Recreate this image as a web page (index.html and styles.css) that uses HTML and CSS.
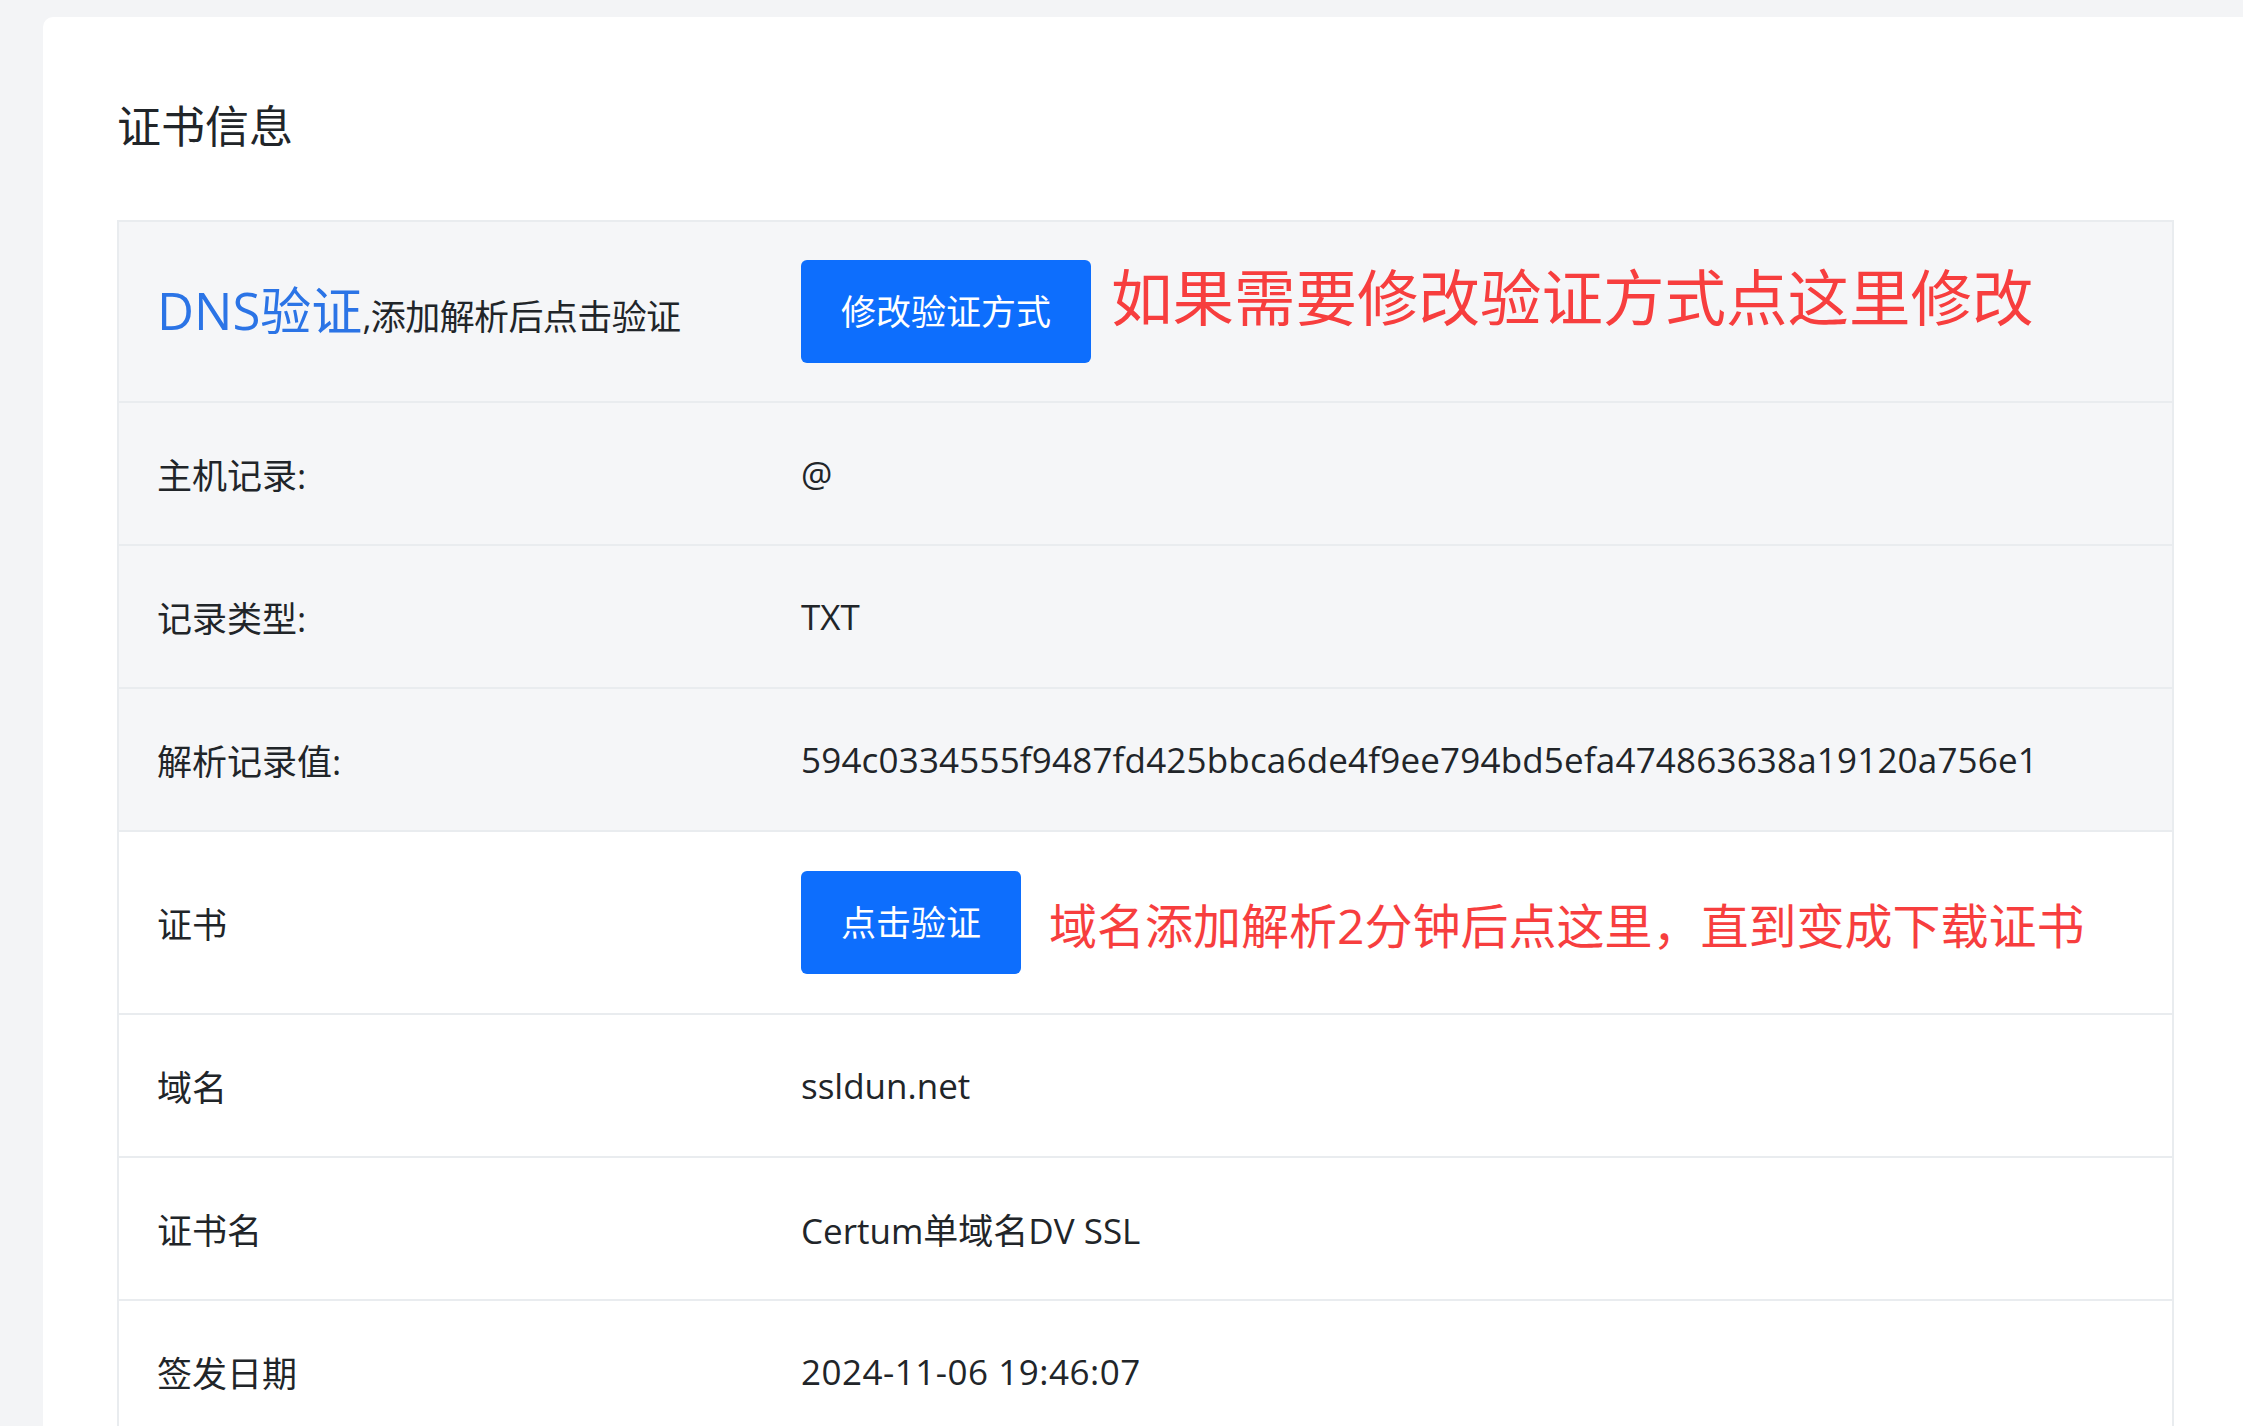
FILE: index.html
```html
<!DOCTYPE html>
<html lang="zh-CN">
<head>
<meta charset="utf-8">
<title>证书信息</title>
<link rel="stylesheet" href="styles.css">
</head>
<body>
<div class="card">
  <h2 class="title">证书信息</h2>
  <div class="table">
    <div class="row gray tall">
      <div class="label"><span class="dns">DNS验证</span><span class="hint">,添加解析后点击验证</span></div>
      <div class="value"><button class="btn">修改验证方式</button><span class="note note-a">如果需要修改验证方式点这里修改</span></div>
    </div>
    <div class="row gray">
      <div class="label">主机记录:</div>
      <div class="value">@</div>
    </div>
    <div class="row gray">
      <div class="label">记录类型:</div>
      <div class="value">TXT</div>
    </div>
    <div class="row gray">
      <div class="label">解析记录值:</div>
      <div class="value hash">594c0334555f9487fd425bbca6de4f9ee794bd5efa474863638a19120a756e1</div>
    </div>
    <div class="row tall">
      <div class="label">证书</div>
      <div class="value"><button class="btn">点击验证</button><span class="note note-b">域名添加解析2分钟后点这里，直到变成下载证书</span></div>
    </div>
    <div class="row">
      <div class="label">域名</div>
      <div class="value">ssldun.net</div>
    </div>
    <div class="row">
      <div class="label">证书名</div>
      <div class="value">Certum单域名DV SSL</div>
    </div>
    <div class="row">
      <div class="label">签发日期</div>
      <div class="value date">2024-11-06 19:46:07</div>
    </div>
  </div>
</div>
</body>
</html>
```
FILE: styles.css
```css
html, body {
  margin: 0;
  padding: 0;
  background: #f3f4f6;
  overflow: hidden;
}
body {
  font-family: "Open Sans", "Noto Sans CJK SC", sans-serif;
  color: #212529;
}
.card {
  margin: 17px -40px 0 43px;
  background: #ffffff;
  border-radius: 10px 0 0 0;
  padding: 71px 0 0 74px;
  min-height: 1500px;
  box-sizing: border-box;
}
.title {
  margin: 0 0 56px 0;
  font-weight: 400;
  font-size: 44px;
  line-height: 76px;
  color: #212529;
}
.table {
  width: 2057px;
  border: 2px solid #e9ecef;
  border-bottom: none;
  box-sizing: border-box;
}
.row {
  display: grid;
  grid-template-columns: 682px 1fr;
  align-items: center;
  height: 143px;
  border-bottom: 2px solid #e9ecef;
  box-sizing: border-box;
  background: #ffffff;
  font-size: 35px;
}
.row.gray {
  background: #f5f6f8;
}
.row.tall {
  height: 183px;
}
.table .row:first-child {
  height: 181px;
}
.label {
  padding-left: 38px;
  white-space: nowrap;
}
.table .row:first-child .label {
  margin-top: -8px;
}
.value {
  display: flex;
  align-items: center;
  white-space: nowrap;
}
.hash {
  letter-spacing: 0.18px;
}
.date {
  letter-spacing: 0.5px;
}
.dns {
  font-size: 51px;
  color: #2b74e6;
}
.hint {
  letter-spacing: -0.6px;
}
.btn {
  font-family: "Open Sans", "Noto Sans CJK SC", sans-serif;
  font-size: 35px;
  color: #ffffff;
  background: #0d6efd;
  border: none;
  border-radius: 6px;
  height: 103px;
  padding: 0 40px;
  line-height: 1;
}
.note {
  color: #f73e3e;
}
.note-a {
  font-size: 61.5px;
  margin-left: 20px;
  margin-top: -34px;
}
.note-b {
  font-size: 48px;
  margin-left: 28px;
}
```
